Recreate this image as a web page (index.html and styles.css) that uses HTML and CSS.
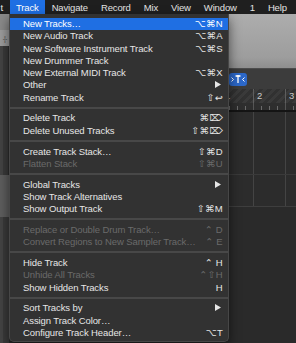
FILE: index.html
```html
<!DOCTYPE html>
<html>
<head>
<meta charset="utf-8">
<link rel="stylesheet" href="styles.css">
</head>
<body>
<div class="screen">
  <div class="menubar">
    <span class="mb-item mb-first">t</span>
    <span class="mb-item mb-active">Track</span>
    <span class="mb-item">Navigate</span>
    <span class="mb-item">Record</span>
    <span class="mb-item">Mix</span>
    <span class="mb-item">View</span>
    <span class="mb-item">Window</span>
    <span class="mb-item">1</span>
    <span class="mb-item">Help</span>
  </div>
  <div class="workspace">
    <div class="side">
      <div class="side-a"></div>
      <div class="side-b"><span class="side-glyph">-¦-</span></div>
      <div class="side-c"></div>
      <div class="side-d"></div>
      <div class="side-e"></div>
    </div>
    <div class="main">
      <div class="toolbar"></div>
      <div class="controlbar">
        <span class="catch-btn">
          <svg width="18" height="13" viewBox="0 0 18 13">
            <path d="M2.5 4.5 L4.5 6.5 L2.5 8.5" fill="none" stroke="#fff" stroke-width="1"/>
            <path d="M6.5 3 H11.5 M9 3 V10" fill="none" stroke="#fff" stroke-width="1.3"/>
            <rect x="7.5" y="2.2" width="3" height="1.8" fill="#fff"/>
            <path d="M15.5 4.5 L13.5 6.5 L15.5 8.5" fill="none" stroke="#fff" stroke-width="1"/>
          </svg>
        </span>
      </div>
      <div class="ruler">
        <div class="bar">1</div>
        <div class="bar">2</div>
        <div class="bar">3</div>
      </div>
      <div class="ticks"></div>
      <div class="tracks tracks-a"></div>
      <div class="tracks tracks-b"></div>
      <div class="empty"></div>
    </div>
  </div>

  <div class="menu">
    <div class="row active"><span class="label">New Tracks…</span><span class="key">⌥⌘N</span></div>
    <div class="row"><span class="label">New Audio Track</span><span class="key">⌥⌘A</span></div>
    <div class="row"><span class="label">New Software Instrument Track</span><span class="key">⌥⌘S</span></div>
    <div class="row"><span class="label">New Drummer Track</span></div>
    <div class="row"><span class="label">New External MIDI Track</span><span class="key">⌥⌘X</span></div>
    <div class="row"><span class="label">Other</span><svg class="arrow" width="6" height="7" viewBox="0 0 6 7"><path d="M0 0 L6 3.5 L0 7 Z" fill="#e6e6e6"/></svg></div>
    <div class="row"><span class="label">Rename Track</span><span class="key">⇧↩</span></div>
    <div class="sep"></div>
    <div class="row"><span class="label">Delete Track</span><span class="key">⌘⌦</span></div>
    <div class="row"><span class="label">Delete Unused Tracks</span><span class="key">⇧⌘⌦</span></div>
    <div class="sep"></div>
    <div class="row"><span class="label">Create Track Stack…</span><span class="key">⇧⌘D</span></div>
    <div class="row disabled"><span class="label">Flatten Stack</span><span class="key">⇧⌘U</span></div>
    <div class="sep"></div>
    <div class="row"><span class="label">Global Tracks</span><svg class="arrow" width="6" height="7" viewBox="0 0 6 7"><path d="M0 0 L6 3.5 L0 7 Z" fill="#e6e6e6"/></svg></div>
    <div class="row"><span class="label">Show Track Alternatives</span></div>
    <div class="row"><span class="label">Show Output Track</span><span class="key">⇧⌘M</span></div>
    <div class="sep"></div>
    <div class="row disabled"><span class="label">Replace or Double Drum Track…</span><span class="key">⌃ D</span></div>
    <div class="row disabled"><span class="label">Convert Regions to New Sampler Track…</span><span class="key">⌃ E</span></div>
    <div class="sep"></div>
    <div class="row"><span class="label">Hide Track</span><span class="key">⌃ H</span></div>
    <div class="row disabled"><span class="label">Unhide All Tracks</span><span class="key">⌃⇧H</span></div>
    <div class="row"><span class="label">Show Hidden Tracks</span><span class="key">H</span></div>
    <div class="sep"></div>
    <div class="row"><span class="label">Sort Tracks by</span><svg class="arrow" width="6" height="7" viewBox="0 0 6 7"><path d="M0 0 L6 3.5 L0 7 Z" fill="#e6e6e6"/></svg></div>
    <div class="row"><span class="label">Assign Track Color…</span></div>
    <div class="row"><span class="label">Configure Track Header…</span><span class="key">⌥T</span></div>
  </div>
</div>
</body>
</html>
```

FILE: styles.css
```css
* { box-sizing: border-box; }
html, body { margin: 0; padding: 0; }
body {
  width: 296px;
  height: 343px;
  overflow: hidden;
  background: #2a2a2a;
  font-family: "Liberation Sans", "DejaVu Sans", sans-serif;
}
.screen {
  position: relative;
  width: 296px;
  height: 343px;
  overflow: hidden;
  display: flex;
  flex-direction: column;
}

/* menu bar */
.menubar {
  height: 14px;
  flex: none;
  display: flex;
  align-items: stretch;
  background: #1f1f1f;
  white-space: nowrap;
}
.mb-item {
  display: flex;
  align-items: center;
  padding: 0 6.5px;
  font-size: 9.5px;
  letter-spacing: -0.15px;
  color: #e4e4e4;
}
.mb-first { padding-left: 0.5px; }
.mb-active { background: #1f6fe3; color: #fff; }

/* background workspace */
.workspace {
  flex: 1;
  display: flex;
}
.side {
  width: 9px;
  flex: none;
  display: flex;
  flex-direction: column;
}
.side-a { height: 16px; background: #8a8a8a; }
.side-b {
  height: 16px;
  background: #9c9c9c;
  display: flex;
  align-items: center;
  justify-content: center;
}
.side-glyph { font-size: 7px; color: #444; letter-spacing: -1px; }
.side-c {
  height: 129px;
  background: #3a3a3a;
  border-left: 3px solid #444;
  border-right: 1px solid #2e2e2e;
}
.side-d { height: 42px; background: #5e5e5e; }
.side-e { flex: 1; background: #3a3a3a; border-left: 3px solid #444; }

.main {
  flex: 1;
  display: flex;
  flex-direction: column;
}
.toolbar {
  height: 54px;
  background: linear-gradient(#adadad, #9d9d9d 80%, #8e8e8e);
}
.controlbar {
  height: 21px;
  background: #3c3c3c;
  border-top: 1px solid #4c4c4c;
  padding: 4px 0 0 220px;
}
.catch-btn {
  display: block;
  width: 18px;
  height: 13px;
  background: #2c68c9;
  border-radius: 3px;
}
.catch-btn svg { display: block; }
.ruler {
  height: 14px;
  display: flex;
  padding-left: 212px;
  background: repeating-linear-gradient(135deg, #3a3a3a 0 3px, #313131 3px 6px);
}
.bar {
  width: 32px;
  flex: none;
  border-left: 1px solid #5e5e5e;
  padding: 1px 0 0 3px;
  font-size: 9.5px;
  color: #c8c8c8;
}
.ticks {
  height: 9px;
  background-color: #2e2e2e;
  background-image:
    repeating-linear-gradient(90deg, #555 0 1px, transparent 1px 32px),
    repeating-linear-gradient(90deg, #6a6a6a 0 1px, transparent 1px 8px);
  background-size: 100% 100%, 100% 4px;
  background-position: 20px 0, 4px 3px;
  background-repeat: no-repeat;
  border-bottom: 2px solid #141414;
}
.tracks {
  background-color: #2c2c2c;
  background-image: repeating-linear-gradient(90deg, #444 0 1px, transparent 1px 32px);
  background-position: 20px 0;
}
.tracks-a { height: 63px; border-bottom: 1px solid #3a3a3a; }
.tracks-b { height: 32px; border-bottom: 1px solid #3e3e3e; }
.empty { flex: 1; background: #2a2a2a; }

/* dropdown menu */
.menu {
  position: absolute;
  left: 9px;
  top: 14px;
  width: 220px;
  padding: 3.5px 0 3px;
  background: #323232;
  border: 1px solid #474747;
  border-top: none;
  border-radius: 0 0 5px 5px;
  box-shadow: 0 5px 12px rgba(0, 0, 0, 0.55);
}
.row {
  height: 12.25px;
  display: flex;
  align-items: center;
  justify-content: space-between;
  padding: 0 5px 0 13px;
  font-size: 9.5px;
  letter-spacing: -0.1px;
  color: #e6e6e6;
  white-space: nowrap;
}
.row.active { background: #1f6fe3; color: #fff; }
.row.disabled { color: #6a6a6a; }
.key { letter-spacing: 0.3px; }
.arrow { margin-right: 2px; display: block; }
.sep {
  height: 2px;
  margin: 3.4px 0 3.2px;
  background: #484848;
}
```
